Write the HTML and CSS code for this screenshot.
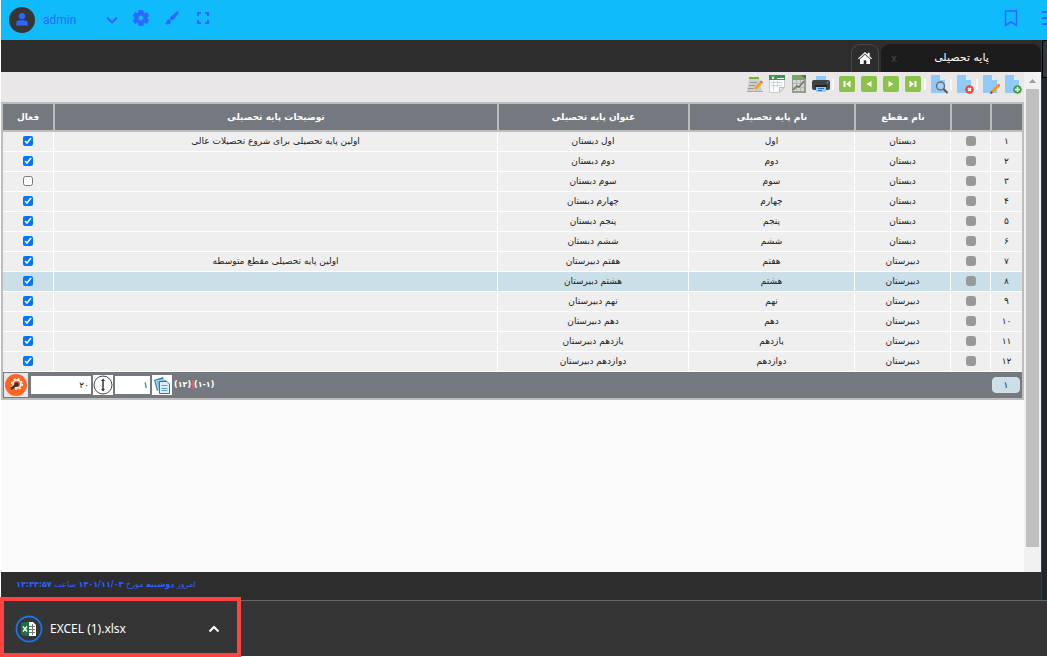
FILE: index.html
```html
<!DOCTYPE html>
<html lang="fa">
<head>
<meta charset="utf-8">
<title>پایه تحصیلی</title>
<link rel="stylesheet" href="styles.css">
</head>
<body>
<header class="topbar">
  <span class="avatar"><svg width="12" height="13" viewBox="0 0 12 13"><circle cx="6" cy="3.2" r="3.1"/><path d="M.3 12.4V10.500Q.5 7.300 3.400 7.300H8.600Q11.500 7.300 11.700 10.500V12.400Z"/></svg></span>
  <span class="user">admin</span>
  <button class="bar-btn chev" aria-label="user menu"><svg width="12" height="8" viewBox="0 0 12 8"><path class="line" d="M1 1.500 6 6.300 11 1.500"/></svg></button>
  <button class="bar-btn" aria-label="settings"><svg width="16" height="16" viewBox="0 0 16 16"><path fill-rule="evenodd" stroke="currentColor" stroke-width=".6" stroke-linejoin="round" d="M6 .3h4l.5 2.300 1.300.8 2.200-.8 1.900 3.200-1.700 1.500v1.400l1.700 1.500-1.900 3.200-2.200-.8-1.300.8-.5 2.300H6l-.5-2.300-1.300-.8-2.200.8L.1 10.200l1.700-1.500V7.300L.1 5.800 2 2.600l2.200.8 1.300-.8ZM8 5.300a2.700 2.700 0 1 0 0 5.400 2.700 2.700 0 0 0 0-5.400Z"/></svg></button>
  <button class="bar-btn" aria-label="theme"><svg width="14" height="14" viewBox="0 0 14 14"><path d="M12.200.3Q13.800.2 13.500 1.900L8.500 8.900 6.200 9.200 4.900 7.900 5.300 6.200ZM4 8.300 6 10.300Q5.500 13.500 2.500 13.500 1 13.500 0 12.500 1.400 12.300 1.500 10.500 1.800 8.500 4 8.300Z"/></svg></button>
  <button class="bar-btn" aria-label="full screen"><svg width="12" height="12" viewBox="0 0 12 12"><path class="line" d="M1 4V1H4M8 1H11V4M11 8V11H8M4 11H1V8"/></svg></button>
  <button class="bar-btn mark" aria-label="bookmark"><svg width="14" height="17" viewBox="0 0 14 17"><path class="line thin" d="M1.500 1H12.500V15.500L7 12 1.500 15.500Z"/></svg></button>
  <button class="bar-btn burger" aria-label="menu"><svg width="5" height="16" viewBox="0 0 5 16"><path class="line" d="M0 2H5M0 8H5M0 14H5"/></svg></button>
</header>
<div class="workspace">
  <div class="app">
    <nav class="tabs">
      <button class="tab home" aria-label="home"><svg width="14" height="12" viewBox="0 0 14 12"><path d="M7 0 9.700 2.500V.8H11.700V4.300L14 6.400 13.200 7.300 7 1.800.8 7.300 0 6.400ZM2 7.200 7 2.800 12 7.200V12H8.300V8.200H5.700V12H2Z"/></svg></button>
      <div class="tab active"><button class="close" aria-label="close tab">x</button><span class="tab-title" dir="rtl">پایه تحصیلی</span></div>
    </nav>
    <div class="body">
      <main class="content">
        <div class="toolbar">
          <button class="tool" aria-label="edit list"><svg width="18" height="18" viewBox="0 0 18 18"><path fill="#cfcfcf" d="M3 3H13L16 16H1Z"/><path fill="#74b72e" d="M3 2H13V4H3Z"/><path stroke="#999" d="M4 7.500H11M3 10.500H9M2 13.500H8"/><path stroke="#aaa" d="M1 16.500H17"/><path stroke="#f3a51c" stroke-width="3" d="M9 14 15 7.500"/><path stroke="#d9534f" stroke-width="3" d="m15 7.500 1-1"/></svg></button>
          <button class="tool" aria-label="excel"><svg width="18" height="20" viewBox="0 0 18 20"><path fill="#f9fafb" stroke="#ccc" d="M1.500 2.500H16.500V14L12 18.500H1.500Z"/><path fill="#3c9646" d="M1 1H17V6H1Z"/><path stroke="#fff" d="M4 2.500 6 5M6 2.500 4 5M9 4.500H16"/><path stroke="#c5d7e8" d="M3 8.500H14M3 11.500H14M5.500 7V17M9.500 7V13"/><path fill="#eee" stroke="#bbb" d="M11.500 18V13.500H16Z"/></svg></button>
          <button class="tool" aria-label="chart report"><svg width="16" height="20" viewBox="0 0 16 20"><path fill="#999" d="M1 1H15V19H1Z"/><path fill="#7da36a" d="M1 1H15V6H1Z"/><path fill="#d4d5cf" d="M2 6H13V17H2Z"/><path stroke="#b6b6b0" d="M2 9.500H13M2 13.500H13M5.500 6V17M9.500 6V17"/><path stroke="#627c5a" stroke-width="1.500" fill="none" d="M2 16 6 12 8 13 13 7"/><path fill="#666" d="m10 1 5 4V1Z"/></svg></button>
          <button class="tool" aria-label="print"><svg width="18" height="18" viewBox="0 0 18 18"><path fill="#90caf9" d="M4 1H14V6H4Z"/><rect y="5" width="18" height="10" rx="2" fill="#424242"/><path fill="#242424" d="M3 10H15V12H3Z"/><path fill="#90caf9" d="M4 12H14V17H4Z"/><path stroke="#1976d2" d="M6 13.500H12M6 15.500H10"/><circle cx="15.500" cy="7.500" r="1" fill="#4a90d9"/></svg></button>
          <span class="sep"></span>
          <button class="tool" aria-label="first"><svg width="16" height="16" viewBox="0 0 16 16"><rect width="16" height="16" rx="2" fill="#8bc34a"/><path fill="#fff" d="M4.500 5H6.500V11H4.500ZM11.500 4.500V11.500L7 8Z"/></svg></button>
          <button class="tool" aria-label="previous"><svg width="16" height="16" viewBox="0 0 16 16"><rect width="16" height="16" rx="2" fill="#8bc34a"/><path fill="#fff" d="M10.500 5V11L5.500 8Z"/></svg></button>
          <button class="tool" aria-label="next"><svg width="16" height="16" viewBox="0 0 16 16"><rect width="16" height="16" rx="2" fill="#8bc34a"/><path fill="#fff" d="M5.500 5V11L10.500 8Z"/></svg></button>
          <button class="tool" aria-label="last"><svg width="16" height="16" viewBox="0 0 16 16"><rect width="16" height="16" rx="2" fill="#8bc34a"/><path fill="#fff" d="M9.500 5H11.500V11H9.500ZM4.500 4.500V11.500L9 8Z"/></svg></button>
          <span class="sep"></span>
          <button class="tool" aria-label="search"><svg width="18" height="20" viewBox="0 0 18 20"><path fill="#90caf9" d="M1 1H10L15 6V19H1Z"/><path fill="#dff0fd" d="M10 1V6H15Z"/><circle cx="10.500" cy="12" r="4" fill="#a9cfea" stroke="#666f78" stroke-width="1.500"/><path stroke="#555" stroke-width="2" d="m13.500 15 4 4"/></svg></button>
          <span class="sep"></span>
          <button class="tool" aria-label="delete"><svg width="18" height="20" viewBox="0 0 18 20"><path fill="#90caf9" d="M1 1H10L15 6V19H1Z"/><path fill="#dff0fd" d="M10 1V6H15Z"/><circle cx="13.500" cy="15.500" r="4.300" fill="#f44336"/><path stroke="#fff" stroke-width="1.500" d="m12 14 3 3m0-3-3 3"/></svg></button>
          <span class="sep"></span>
          <button class="tool" aria-label="edit"><svg width="18" height="20" viewBox="0 0 18 20"><path fill="#90caf9" d="M1 1H10L15 6V19H1Z"/><path fill="#dff0fd" d="M10 1V6H15Z"/><path stroke="#ff9800" stroke-width="3" d="m10 18 6-6"/><path stroke="#e57373" stroke-width="3" d="m16 12 1.500-1.500"/><path fill="#5d4037" d="m8 20 1-3 2 2Z"/></svg></button>
          <button class="tool" aria-label="add"><svg width="18" height="20" viewBox="0 0 18 20"><path fill="#90caf9" d="M1 1H10L15 6V19H1Z"/><path fill="#dff0fd" d="M10 1V6H15Z"/><circle cx="13.500" cy="15.500" r="4.300" fill="#43a047"/><path stroke="#fff" stroke-width="1.500" d="M11 15.500h5M13.500 13v5"/></svg></button>
        </div>
        <table class="grid" dir="rtl">
          <colgroup><col class="c-num"><col class="c-sel"><col class="c-level"><col class="c-name"><col class="c-title"><col><col class="c-active"></colgroup>
          <thead><tr><th></th><th></th><th>نام مقطع</th><th>نام پایه تحصیلی</th><th>عنوان پایه تحصیلی</th><th>توضیحات پایه تحصیلی</th><th>فعال</th></tr></thead>
          <tbody>
            <tr><td>۱</td><td><button class="pick" aria-label="انتخاب ۱"></button></td><td>دبستان</td><td>اول</td><td>اول دبستان</td><td>اولین پایه تحصیلی برای شروع تحصیلات عالی</td><td><input type="checkbox" aria-label="فعال ۱" checked></td></tr>
            <tr><td>۲</td><td><button class="pick" aria-label="انتخاب ۲"></button></td><td>دبستان</td><td>دوم</td><td>دوم دبستان</td><td></td><td><input type="checkbox" aria-label="فعال ۲" checked></td></tr>
            <tr><td>۳</td><td><button class="pick" aria-label="انتخاب ۳"></button></td><td>دبستان</td><td>سوم</td><td>سوم دبستان</td><td></td><td><input type="checkbox" aria-label="فعال ۳"></td></tr>
            <tr><td>۴</td><td><button class="pick" aria-label="انتخاب ۴"></button></td><td>دبستان</td><td>چهارم</td><td>چهارم دبستان</td><td></td><td><input type="checkbox" aria-label="فعال ۴" checked></td></tr>
            <tr><td>۵</td><td><button class="pick" aria-label="انتخاب ۵"></button></td><td>دبستان</td><td>پنجم</td><td>پنجم دبستان</td><td></td><td><input type="checkbox" aria-label="فعال ۵" checked></td></tr>
            <tr><td>۶</td><td><button class="pick" aria-label="انتخاب ۶"></button></td><td>دبستان</td><td>ششم</td><td>ششم دبستان</td><td></td><td><input type="checkbox" aria-label="فعال ۶" checked></td></tr>
            <tr><td>۷</td><td><button class="pick" aria-label="انتخاب ۷"></button></td><td>دبیرستان</td><td>هفتم</td><td>هفتم دبیرستان</td><td>اولین پایه تحصیلی مقطع متوسطه</td><td><input type="checkbox" aria-label="فعال ۷" checked></td></tr>
            <tr class="selected"><td>۸</td><td><button class="pick" aria-label="انتخاب ۸"></button></td><td>دبیرستان</td><td>هشتم</td><td>هشتم دبیرستان</td><td></td><td><input type="checkbox" aria-label="فعال ۸" checked></td></tr>
            <tr><td>۹</td><td><button class="pick" aria-label="انتخاب ۹"></button></td><td>دبیرستان</td><td>نهم</td><td>نهم دبیرستان</td><td></td><td><input type="checkbox" aria-label="فعال ۹" checked></td></tr>
            <tr><td>۱۰</td><td><button class="pick" aria-label="انتخاب ۱۰"></button></td><td>دبیرستان</td><td>دهم</td><td>دهم دبیرستان</td><td></td><td><input type="checkbox" aria-label="فعال ۱۰" checked></td></tr>
            <tr><td>۱۱</td><td><button class="pick" aria-label="انتخاب ۱۱"></button></td><td>دبیرستان</td><td>یازدهم</td><td>یازدهم دبیرستان</td><td></td><td><input type="checkbox" aria-label="فعال ۱۱" checked></td></tr>
            <tr><td>۱۲</td><td><button class="pick" aria-label="انتخاب ۱۲"></button></td><td>دبیرستان</td><td>دوازدهم</td><td>دوازدهم دبیرستان</td><td></td><td><input type="checkbox" aria-label="فعال ۱۲" checked></td></tr>
          </tbody>
          <tfoot><tr><td colspan="7">
            <div class="pager" dir="ltr">
              <button class="config" aria-label="grid settings"><svg width="22" height="22" viewBox="0 0 22 22"><circle cx="11" cy="11" r="11" fill="#ff6421"/><circle cx="12" cy="10" r="4" fill="none" stroke="#fff" stroke-width="1.500"/><circle cx="12" cy="10" r="5.300" fill="none" stroke="#fff" stroke-width="1.300" stroke-dasharray="2 2.160"/><path stroke="#333" stroke-width="2.500" d="m6 15 5-4"/><circle cx="11.500" cy="10.500" r="2.200" fill="#333"/></svg></button>
              <input class="size" dir="rtl" type="text" value="۲۰" aria-label="تعداد سطر">
              <button class="square" aria-label="row count"><svg width="20" height="20" viewBox="0 0 20 20"><circle cx="10" cy="10" r="9" fill="#fff" stroke="#444"/><path stroke="#333" stroke-width="1.500" d="M10 5V15"/><path fill="#333" d="m10 3.500 2 2.500H8ZM10 16.500l2-2.500H8Z"/></svg></button>
              <input class="page" dir="rtl" type="text" value="۱" aria-label="صفحه">
              <button class="square" aria-label="go to page"><svg width="20" height="20" viewBox="0 0 20 20"><path fill="#2f83b5" d="m2 5 9-3 3 10-9 4Z"/><path fill="#7bbbe0" stroke="#fff" stroke-width=".6" d="m4 6 10-2 2 11-9 2Z"/><path fill="#dceffc" stroke="#2978a8" d="M7.500 6.500H15L17.500 9V18.500H7.500Z"/><path stroke="#5b9fc5" d="M9.500 10.500h6M9.500 13.500h6M9.500 15.500h6"/></svg></button>
              <span class="range" dir="rtl">(۱-۱)<i>|</i>(۱۲)</span>
              <button class="page-no">۱</button>
            </div>
          </td></tr></tfoot>
        </table>
      </main>
      <div class="scroll"><svg class="up" width="17" height="17" viewBox="0 0 17 17"><path d="M5 11 8.500 7 12 11Z"/></svg><span class="thumb"></span></div>
    </div>
    <footer class="status" dir="rtl">امروز <b>دوشنبه</b> مورخ <b>۱۴۰۱/۱۱/۰۳</b> ساعت <b>۱۴:۳۴:۵۷</b></footer>
  </div>
  <aside class="strip"><span></span></aside>
</div>
<section class="downloads">
  <div class="download">
    <svg width="28" height="28" viewBox="0 0 28 28"><circle cx="14" cy="14" r="12.500" fill="none" stroke="#1a73e8" stroke-width="1.800"/><path fill="#fff" d="M12 7H18L21 10V21H12Z"/><path stroke="#777" d="M14 11.500H20M14 14.500H20M14 17.500H20M17.500 9V20"/><path fill="#1e7145" d="m6 8 8-1.500V21.500L6 20Z"/><path stroke="#fff" stroke-width="1.400" d="m8 11.500 4 5m0-5-4 5"/></svg>
    <a class="file" href="#">EXCEL (1).xlsx</a>
    <button class="more" aria-label="more"><svg width="12" height="8" viewBox="0 0 12 8"><path d="M1.500 6.500 6 2 10.500 6.500"/></svg></button>
  </div>
</section>
</body>
</html>
```
FILE: styles.css
```css
* { box-sizing: border-box; }
body {
  margin: 0;
  padding: 0 0 1px 1px;
  height: 100vh;
  display: flex;
  flex-direction: column;
  overflow: hidden;
  background: #fff;
  color: #222;
  font: 9px/16px "DejaVu Sans", sans-serif;
}
button { border: 0; padding: 0; background: none; color: inherit; font: inherit; }
svg { display: block; flex: none; fill: none; }

.topbar {
  flex: none;
  height: 40px;
  padding: 0 0 4px 8px;
  display: flex;
  align-items: center;
  background: #10bbfc;
  color: #2e66ff;
}
.topbar svg { fill: currentColor; }
.topbar .line { fill: none; stroke: currentColor; stroke-width: 2; }
.topbar .thin { stroke-width: 1.5; }
.avatar {
  width: 26px;
  height: 26px;
  margin-top: 3px;
  border-radius: 50%;
  background: #363636;
  display: grid;
  place-items: center;
}
.user { width: 56px; margin: 4px 0 0 8px; font: 12px/16px Roboto, sans-serif; }
.bar-btn { width: 31px; display: grid; place-items: center; }
.chev { width: 26px; margin-top: 3px; }
.mark { margin-left: auto; width: 14px; }
.burger { width: 5px; margin-left: 24px; }

.workspace { flex: 1; min-height: 0; display: flex; }
.app { flex: 1; min-width: 0; display: flex; flex-direction: column; }
.tabs {
  flex: none;
  height: 32px;
  padding-top: 4px;
  display: flex;
  justify-content: flex-end;
  gap: 2px;
  background: #2d2d2d;
  color: #fff;
}
.tab { border-radius: 9px 9px 0 0; }
.home { width: 28px; border: 1px solid #484848; border-bottom: 0; padding-bottom: 2px; display: grid; place-items: center; }
.home svg { fill: #fff; }
.active { width: 160px; padding-left: 9px; display: flex; align-items: center; background: #1c1c1c; }
.close { width: 8px; color: #484848; font: 11px/16px "Liberation Sans", sans-serif; }
.tab-title { flex: 1; padding-right: 16px; text-align: center; font-size: 11px; }

.body { flex: 1; min-height: 0; display: flex; }
.content { flex: 1; min-width: 0; background: #fafafa; }
.toolbar {
  height: 30px;
  padding-bottom: 6px;
  display: flex;
  justify-content: flex-end;
  align-items: center;
  background: #e9e7e8;
}
.tool { width: 22px; height: 22px; display: grid; place-items: center; }
.sep { width: 4px; height: 11px; border-left: 2px solid #f8f8f8; }

.grid {
  width: 100%;
  table-layout: fixed;
  border: 2px solid #bdbdbd;
  border-collapse: separate;
  border-spacing: 0;
}
.c-num { width: 32px; }
.c-sel { width: 40px; }
.c-level { width: 96px; }
.c-name { width: 166px; }
.c-title { width: 191px; }
.c-active { width: 50px; }
th {
  height: 28px;
  padding: 0;
  border-left: 2px solid #bdbdbd;
  border-bottom: 2px solid #bdbdbd;
  background: #747980;
  color: #fff;
}
tbody td {
  height: 20px;
  padding: 0 0 2px;
  border-left: 1px solid #fff;
  border-bottom: 1px solid #fff;
  background: #efefef;
  text-align: center;
  white-space: nowrap;
}
th:last-child, tbody td:last-child { border-left: 0; }
.selected td { background: #cbdfe8; }
.pick { display: block; width: 10px; height: 10px; margin: 0 auto; border-radius: 3px; background: #999; }
tbody input { display: block; width: 10px; height: 10px; margin: 0 auto; accent-color: #0075ff; }
tfoot td { padding: 0; background: #747980; }
.pager { height: 26px; padding: 0 2px 0 1px; display: flex; align-items: center; gap: 2px; }
.pager input { height: 18px; padding: 0 2px; border: 0; background: #fff; color: #222; font: inherit; }
.pager .size { width: 60px; margin-left: 1px; }
.pager .page { width: 35px; }
.config { width: 24px; height: 24px; background: #e9e7e8; display: grid; place-items: center; }
.square { width: 20px; height: 20px; background: #fff; }
.range { color: #fff; font-size: 8px; font-weight: bold; }
.range i { color: #ff5a6e; font-style: normal; }
.page-no { width: 28px; height: 16px; margin-left: auto; border: 1px solid #ddd; border-radius: 4px; background: #cbdfe8; color: #222; line-height: 14px; }

.scroll { flex: none; width: 17px; padding: 0 2px 25px; background: #f1f1f1; display: flex; flex-direction: column; align-items: center; }
.up { fill: #999; }
.thumb { flex: 1; width: 13px; background: #c0c0c0; }
.status { flex: none; padding: 5px 0 7px 15px; background: #2d2d2d; color: #3060ff; font-size: 8px; text-align: left; }
.strip { flex: none; width: 6px; background: #1d272e; border-left: 1px solid #3a3a3a; }
.strip span { display: block; height: 38px; border: solid #000; border-width: 1px 0 1px 1px; background: #30383f; }

.downloads { flex: none; height: 56px; border-top: 1px solid #666; background: #353535; }
.download {
  position: relative;
  width: 238px;
  height: 100%;
  padding: 0 19px 0 14px;
  display: flex;
  align-items: center;
  gap: 7px;
  color: #fff;
}
.download::after {
  content: "";
  position: absolute;
  inset: -4px -2px -1px -1px;
  border: 4px solid #ff4242;
  pointer-events: none;
}
.file { color: #fff; font: 12px/16px "Noto Sans", sans-serif; text-decoration: none; }
.more { margin-left: auto; }
.more path { stroke: #fff; stroke-width: 2; }
```
